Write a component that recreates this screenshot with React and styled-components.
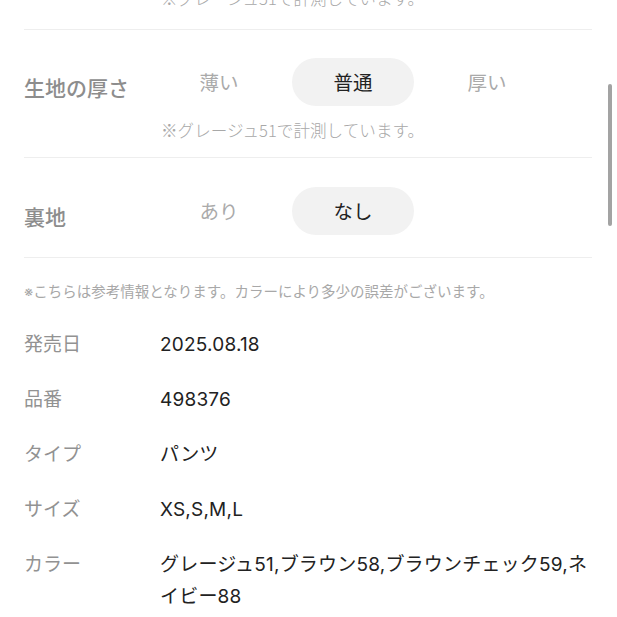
import React from "react";
import styled, { createGlobalStyle } from "styled-components";

const GlobalStyle = createGlobalStyle`
  html, body {
    margin: 0;
    padding: 0;
    background: #fff;
    overflow: hidden;
  }
  body {
    font-family: Inter, "Noto Sans CJK JP", sans-serif;
    -webkit-font-smoothing: antialiased;
  }
`;

const Page = styled.div`
  height: 100vh;
  overflow: hidden;
  padding: 0 25px 0 24px;
`;

const Section = styled.div`
  padding: ${({ $top }) => $top}px 0 ${({ $bottom }) => $bottom}px;
  border-bottom: 1px solid #eeeeee;
`;

const Row = styled.div`
  display: flex;
  align-items: center;
`;

const ScaleLabel = styled.div`
  width: 128px;
  flex-shrink: 0;
  padding-top: 10px;
  font-size: 21px;
  font-weight: 500;
  color: #8d8d8d;
`;

const Options = styled.div`
  display: grid;
  grid-template-columns: repeat(3, 134px);
`;

const Option = styled.div`
  justify-self: center;
  width: 122px;
  height: 48px;
  border-radius: 24px;
  display: flex;
  align-items: center;
  justify-content: center;
  font-size: 19.5px;
  padding-bottom: 2px;
  box-sizing: border-box;
  background: ${({ $active }) => ($active ? "#f2f2f2" : "transparent")};
  color: ${({ $active }) => ($active ? "#222" : "#aaaaaa")};
`;

const Note = styled.div`
  margin: ${({ $margin }) => $margin};
  padding-left: 137px;
  font-family: "Noto Sans CJK JP", sans-serif;
  font-size: 16.6px;
  font-weight: 300;
  line-height: 18px;
  color: #a8a8a8;
`;

const Disclaimer = styled.p`
  margin: 24px 0 27px;
  font-size: 14.5px;
  line-height: 20px;
  color: #a8a8a8;
`;

const Specs = styled.dl`
  margin: 0;
  display: grid;
  grid-template-columns: 136px 1fr;
  row-gap: 23px;
  font-size: 19px;
  line-height: 32px;
`;

const Term = styled.dt`
  color: #929292;
`;

const Value = styled.dd`
  margin: 0;
  color: #222;
  letter-spacing: 0.2px;
`;

const ScrollThumb = styled.div`
  position: fixed;
  top: 84px;
  right: 5px;
  width: 4px;
  height: 142px;
  border-radius: 2px;
  background: #a3a3a3;
`;

const scales = [
  {
    label: "生地の厚さ",
    options: ["薄い", "普通", "厚い"],
    active: 1,
    note: "※グレージュ51で計測しています。",
    top: 28,
    bottom: 18,
  },
  {
    label: "裏地",
    options: ["あり", "なし"],
    active: 1,
    top: 29,
    bottom: 22,
  },
];

const specs = [
  ["発売日", "2025.08.18"],
  ["品番", "498376"],
  ["タイプ", "パンツ"],
  ["サイズ", "XS,S,M,L"],
  ["カラー", "グレージュ51,ブラウン58,ブラウンチェック59,ネイビー88"],
];

const App = () => {
  return (
    <Page>
      <GlobalStyle />
      <Section $top={0} $bottom={22}>
        <Note $margin="-11px 0 0">※グレージュ51で計測しています。</Note>
      </Section>
      {scales.map((scale) => (
        <Section key={scale.label} $top={scale.top} $bottom={scale.bottom}>
          <Row>
            <ScaleLabel>{scale.label}</ScaleLabel>
            <Options>
              {scale.options.map((opt, i) => (
                <Option key={opt} $active={i === scale.active}>
                  {opt}
                </Option>
              ))}
            </Options>
          </Row>
          {scale.note && <Note $margin="15px 0 0">{scale.note}</Note>}
        </Section>
      ))}
      <Disclaimer>
        ※こちらは参考情報となります。カラーにより多少の誤差がございます。
      </Disclaimer>
      <Specs>
        {specs.map(([term, value]) => (
          <React.Fragment key={term}>
            <Term>{term}</Term>
            <Value>{value}</Value>
          </React.Fragment>
        ))}
      </Specs>
      <ScrollThumb />
    </Page>
  );
};

export default App;
